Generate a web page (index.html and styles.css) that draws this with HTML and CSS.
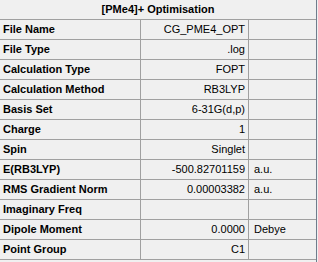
FILE: index.html
```html
<!DOCTYPE html>
<html>
<head>
<meta charset="utf-8">
<link rel="stylesheet" href="styles.css">
</head>
<body>
<div class="panel">
  <div class="title">[PMe4]+ Optimisation</div>
  <div class="row"><div class="label">File Name</div><div class="value">CG_PME4_OPT</div><div class="unit"></div></div>
  <div class="row"><div class="label">File Type</div><div class="value">.log</div><div class="unit"></div></div>
  <div class="row"><div class="label">Calculation Type</div><div class="value">FOPT</div><div class="unit"></div></div>
  <div class="row"><div class="label">Calculation Method</div><div class="value">RB3LYP</div><div class="unit"></div></div>
  <div class="row"><div class="label">Basis Set</div><div class="value">6-31G(d,p)</div><div class="unit"></div></div>
  <div class="row"><div class="label">Charge</div><div class="value">1</div><div class="unit"></div></div>
  <div class="row"><div class="label">Spin</div><div class="value">Singlet</div><div class="unit"></div></div>
  <div class="row"><div class="label">E(RB3LYP)</div><div class="value">-500.82701159</div><div class="unit">a.u.</div></div>
  <div class="row"><div class="label">RMS Gradient Norm</div><div class="value">0.00003382</div><div class="unit">a.u.</div></div>
  <div class="row"><div class="label">Imaginary Freq</div><div class="value"></div><div class="unit"></div></div>
  <div class="row"><div class="label">Dipole Moment</div><div class="value">0.0000</div><div class="unit">Debye</div></div>
  <div class="row"><div class="label">Point Group</div><div class="value">C1</div><div class="unit"></div></div>
</div>
</body>
</html>
```
FILE: styles.css
```css
html, body {
  margin: 0;
  padding: 0;
  background: #f0f0f0;
}

.panel {
  width: 317px;
  height: 262px;
  box-sizing: border-box;
  border-right: 1px solid #6f7c8c;
  font-family: "Liberation Sans", Arial, sans-serif;
  font-size: 11px;
  color: #000;
}

.title {
  height: 19px;
  line-height: 19px;
  border-bottom: 1px solid #a0a0a0;
  text-align: center;
  font-weight: bold;
}

.row {
  display: grid;
  grid-template-columns: 141px 108px 1fr;
  height: 19px;
  line-height: 19px;
  border-bottom: 1px solid #a0a0a0;
}

.label {
  font-weight: bold;
  padding-left: 3px;
  border-right: 1px solid #a0a0a0;
  white-space: nowrap;
}

.value {
  text-align: right;
  padding-right: 3px;
  border-right: 1px solid #a0a0a0;
  white-space: nowrap;
}

.unit {
  padding-left: 5px;
  white-space: nowrap;
}
```
